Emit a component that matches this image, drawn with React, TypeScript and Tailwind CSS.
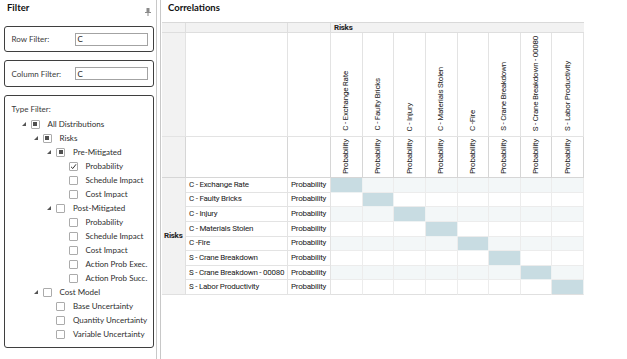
import React from 'react'

type CheckState = 'mixed' | 'checked' | 'none'

interface TreeItem {
  label: string
  level: number
  arrow?: boolean
  state?: CheckState
}

const tree: TreeItem[] = [
  { label: 'All Distributions', level: 0, arrow: true, state: 'mixed' },
  { label: 'Risks', level: 1, arrow: true, state: 'mixed' },
  { label: 'Pre-Mitigated', level: 2, arrow: true, state: 'mixed' },
  { label: 'Probability', level: 3, state: 'checked' },
  { label: 'Schedule Impact', level: 3 },
  { label: 'Cost Impact', level: 3 },
  { label: 'Post-Mitigated', level: 2, arrow: true },
  { label: 'Probability', level: 3 },
  { label: 'Schedule Impact', level: 3 },
  { label: 'Cost Impact', level: 3 },
  { label: 'Action Prob Exec.', level: 3 },
  { label: 'Action Prob Succ.', level: 3 },
  { label: 'Cost Model', level: 1, arrow: true },
  { label: 'Base Uncertainty', level: 2 },
  { label: 'Quantity Uncertainty', level: 2 },
  { label: 'Variable Uncertainty', level: 2 },
]

const indent = ['pl-[15.5px]', 'pl-[27.5px]', 'pl-[41px]', 'pl-[53.5px]']

const risks = [
  'C - Exchange Rate',
  'C - Faulty Bricks',
  'C - Injury',
  'C - Materials Stolen',
  'C -Fire',
  'S - Crane Breakdown',
  'S - Crane Breakdown - 00080',
  'S - Labor Productivity',
]

const Checkbox = ({ state = 'none' }: { state?: CheckState }) => (
  <span className="w-[9px] h-[9px] border border-[#ababab] bg-white rounded-[1px] flex items-center justify-center shrink-0">
    {state === 'mixed' && <span className="w-[4px] h-[4px] bg-[#4f4f4f]" />}
    {state === 'checked' && (
      <svg width="7" height="7" viewBox="0 0 7 7">
        <path d="M1 3.8 L2.8 5.5 L6 1.3" fill="none" stroke="#333" strokeWidth="1" />
      </svg>
    )}
  </span>
)

const Arrow = () => (
  <svg width="4" height="4" viewBox="0 0 4 4" className="ml-[1px]">
    <polygon points="4,0 4,4 0,4" fill="#555" />
  </svg>
)

const FilterBox = ({ label, value, tall }: { label: string; value: string; tall?: boolean }) => (
  <div
    className={`border-[1.5px] border-[#3f3f3f] rounded-[3px] flex items-center justify-between pl-[6.5px] pr-[5.5px] ${
      tall ? 'h-[27px]' : 'h-[26px]'
    }`}
  >
    <span className="text-[#3a3a3a]">{label}</span>
    <div className="w-[73px] h-[13px] border border-[#a3a3a3] bg-white flex items-center pl-[2px] text-[#222]">
      {value}
    </div>
  </div>
)

const VerticalText = ({ text }: { text: string }) => (
  <span className="[writing-mode:vertical-rl] rotate-180 whitespace-nowrap leading-[10px]">{text}</span>
)

const App = () => {
  return (
    <div className="flex w-[627px] h-[359px] bg-white overflow-hidden">
      <aside className="w-[156px] shrink-0 pl-[4px] pr-[2px] font-['Lato',sans-serif] text-[8px]">
        <div className="h-[26px] flex justify-between items-start pt-[2px] pl-[3px]">
          <span className="font-bold text-[9.5px] leading-[12px] text-[#111]">Filter</span>
          <svg width="6" height="8" viewBox="0 0 6 8" className="mt-[6px] mr-[3px]">
            <rect x="1.5" y="0" width="3" height="4" fill="#8a8a8a" />
            <rect x="0" y="4" width="6" height="1" fill="#8a8a8a" />
            <rect x="2.5" y="5" width="1" height="3" fill="#8a8a8a" />
          </svg>
        </div>

        <div className="flex flex-col gap-[8px]">
          <FilterBox label="Row Filter:" value="C" />
          <FilterBox label="Column Filter:" value="C" tall />

          <div className="h-[253px] border-[1.5px] border-[#3f3f3f] rounded-[3px] pt-[6px]">
            <div className="pl-[6.5px] h-[14px] flex items-center text-[#3a3a3a]">Type Filter:</div>
            <div className="flex flex-col pt-[1px]">
              {tree.map((item, i) => (
                <div key={i} className={`h-[14px] flex items-center text-[#2e2e2e] ${indent[item.level]}`}>
                  <span className="w-[10px] flex items-center">{item.arrow && <Arrow />}</span>
                  <Checkbox state={item.state} />
                  <span className="ml-[8px] whitespace-nowrap">{item.label}</span>
                </div>
              ))}
            </div>
          </div>
        </div>
      </aside>

      <div className="w-[5px] shrink-0 border-l border-r border-[#c8c8c8]" />

      <main className="flex-1 pl-[1px] font-['Roboto',sans-serif] text-[8px] tracking-[-0.25px] text-[#222]">
        <div className="h-[22px] pl-[6px] pt-[2px] tracking-normal">
          <span className="font-['Lato',sans-serif] font-bold text-[9.5px] leading-[12px] text-[#111]">Correlations</span>
        </div>

        <div className="grid w-max grid-cols-[24px_102px_43px_repeat(8,31.625px)] grid-rows-[10px_104px_41px_repeat(8,14.625px)] border-t border-[#d9d9d9]">
          {/* header row 1 */}
          <div className="bg-[#f2f2f2] border-r border-b border-[#dedede]" />
          <div className="bg-[#f2f2f2] border-r border-b border-[#dedede]" />
          <div className="bg-[#f2f2f2] border-r border-b border-[#dedede]" />
          <div className="col-span-8 bg-[#f2f2f2] border-b border-[#dedede] font-bold leading-[9px] pl-[3px] flex items-center">
            Risks
          </div>

          {/* header row 2 */}
          <div className="bg-[#f2f2f2] border-r border-b border-[#e3e3e3]" />
          <div className="border-r border-b border-[#e3e3e3]" />
          <div className="border-r border-b border-[#e3e3e3]" />
          {risks.map((r) => (
            <div key={r} className="border-r border-b border-[#e3e3e3] flex flex-col justify-end items-center pb-[5px]">
              <VerticalText text={r} />
            </div>
          ))}

          {/* header row 3 */}
          <div className="bg-[#f2f2f2] border-r border-b border-[#d6d6d6]" />
          <div className="border-r border-b border-[#d6d6d6]" />
          <div className="border-r border-b border-[#d6d6d6]" />
          {risks.map((r) => (
            <div key={r} className="border-r border-b border-[#d6d6d6] flex flex-col justify-end items-center pb-[3px]">
              <VerticalText text="Probability" />
            </div>
          ))}

          {/* data rows */}
          <div className="row-span-8 bg-[#f2f2f2] border-r border-b border-[#e0e0e0] flex items-center pl-[2px] font-bold">
            Risks
          </div>
          {risks.map((r, i) => (
            <React.Fragment key={r}>
              <div className="border-r border-b border-[#e3e3e3] flex items-center pl-[3px] whitespace-nowrap">{r}</div>
              <div className="border-r border-b border-[#e3e3e3] flex items-center pl-[3px]">Probability</div>
              {risks.map((c, j) => (
                <div
                  key={c}
                  className={`border-r border-b ${
                    i === j
                      ? 'bg-[#c8dce2] border-[#eef2f3]'
                      : i % 2 === 0
                      ? 'bg-[#f3f7f8] border-[#ececec]'
                      : 'bg-white border-[#ececec]'
                  } ${i === risks.length - 1 ? 'border-b-[#e0e0e0]' : ''}`}
                />
              ))}
            </React.Fragment>
          ))}
        </div>
      </main>
    </div>
  )
}

export default App
